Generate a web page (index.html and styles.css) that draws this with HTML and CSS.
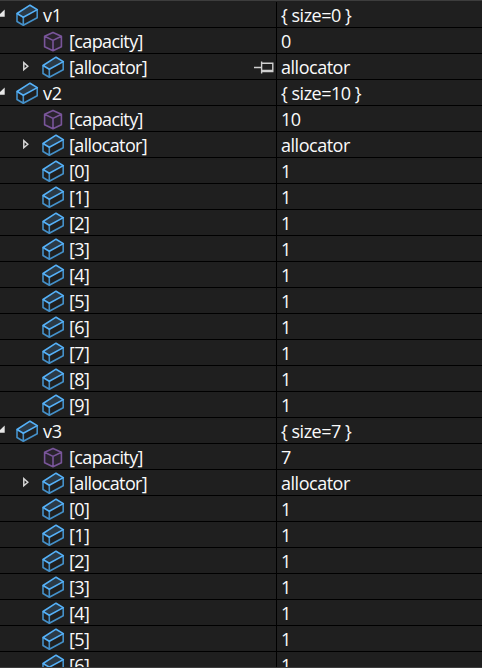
FILE: index.html
```html
<!DOCTYPE html>
<html lang="en">
<head>
<meta charset="utf-8">
<title>Watch</title>
<link rel="stylesheet" href="styles.css">
</head>
<body>
<svg class="defs" aria-hidden="true">
  <symbol id="box" viewBox="0 0 24 25">
    <path class="box-fill" d="M14 3.2 21.3 8 7.3 15.2.8 11.5Z"/>
    <path class="box-dim" d="M1 11.7V19.5L7.3 23.2 21.2 15.8V8M7.3 15V23"/>
    <path class="box-line" d="M14 3.2 21.3 7.6 7.3 15.2 1 11.5Z"/>
  </symbol>
  <symbol id="cube" viewBox="0 0 24 25">
    <path class="cube-fill" d="M11 4.4 19.4 8.2V18.8L11 22.8 2.6 18.8V8.2Z"/>
    <path class="cube-line" d="M11 4.4 19.4 8.2V18.8L11 22.8 2.6 18.8V8.2ZM2.6 8.2 11 12.4 19.4 8.2M11 12.4V22.8"/>
  </symbol>
  <symbol id="closed" viewBox="0 0 8 25">
    <path class="closed" d="M1.8 8.7V15.7L5.8 12.2Z"/>
  </symbol>
  <symbol id="open" viewBox="0 0 8 25">
    <path class="open" d="M7.7 7.4V14.7H.4Z"/>
  </symbol>
  <symbol id="pin" viewBox="0 0 20 25">
    <path class="pin" d="M0 13.5H7M7.6 7.5V19.5M7.6 9.2H18.8V17.5H7.6M7.6 16.5H18.8"/>
  </symbol>
</svg>
<main class="watch" id="watch"></main>
<script src="script.js"></script>
</body>
</html>
```

FILE: styles.css
```css
* { box-sizing: border-box; }
body {
  margin: 0;
  height: 668px;
  overflow: hidden;
  background: #1f1f1f;
  color: #fafafa;
  font: 18px/25px "Open Sans", "Noto Sans", sans-serif;
}
.defs { position: absolute; width: 0; height: 0; }
.watch {
  height: 668px;
  overflow: hidden;
  border-top: 1px solid #3d3d3d;
  border-bottom: 1px solid #3d3d3d;
  padding-top: 1px;
}
.row {
  display: grid;
  grid-template-columns: 277px 1fr;
  height: 26px;
  border-bottom: 1px solid #000;
  white-space: pre;
}
.name { display: flex; border-right: 1px solid #000; padding-right: 2px; }
.name.root { margin-left: -3px; }
.name.child { padding-left: 22px; }
.name svg, .label { flex: none; }
.arrow { width: 8px; height: 25px; }
.root .arrow { margin-right: 11px; }
.child .arrow { margin-right: 12px; }
.icon { width: 24px; height: 25px; margin-right: 3px; }
.label, .value { display: block; height: 25px; padding-top: 1px; }
.label { letter-spacing: -0.62px; }
.root .label { letter-spacing: -0.2px; }
.value { padding-left: 4px; overflow: hidden; letter-spacing: -0.48px; }
.pin-icon { width: 20px; height: 25px; margin-left: auto; }
.box-fill { fill: #2b3a47; }
.box-line, .box-dim, .cube-line, .pin, .closed { fill: none; stroke-width: 1.6; stroke-linejoin: round; }
.box-line { stroke: #55b1f8; }
.box-dim { stroke: #4490c9; }
.cube-fill { fill: #29232d; }
.cube-line { stroke: #79559a; }
.closed { stroke: #d6d6d6; stroke-width: 1.5; stroke-linejoin: miter; }
.open { fill: #e8e8e8; }
.pin { stroke: #d0d0d0; stroke-width: 1.4; stroke-linejoin: miter; }
```

FILE: script.js
```js
const vectors = [
  { name: "v1", size: 0, shown: 0, pin: true },
  { name: "v2", size: 10, shown: 10 },
  { name: "v3", size: 7, shown: 7 }
];

const use = (id, cls) => `<svg class="${cls}"><use href="#${id}"/></svg>`;

function row(kind, arrow, icon, label, value, pin) {
  const arrowSvg = arrow ? use(arrow, "arrow") : '<span class="arrow"></span>';
  return `<div class="row"><div class="name ${kind}">${arrowSvg}${use(icon, "icon")}` +
    `<span class="label">${label}</span>${pin ? use("pin", "pin-icon") : ""}</div>` +
    `<span class="value">${value}</span></div>`;
}

document.getElementById("watch").innerHTML = vectors.map(v => {
  const rows = [
    row("root", "open", "box", v.name, `{ size=${v.size} }`),
    row("child", "", "cube", "[capacity]", v.size),
    row("child", "closed", "box", "[allocator]", "allocator", v.pin)
  ];
  for (let i = 0; i < v.shown; i++) rows.push(row("child", "", "box", `[${i}]`, 1));
  return rows.join("");
}).join("");
```
